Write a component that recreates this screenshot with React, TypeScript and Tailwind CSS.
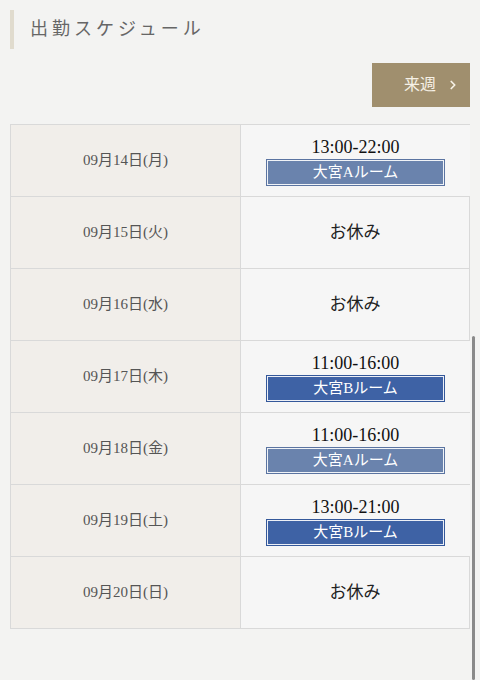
import { ChevronRight } from "lucide-react";

type Day = {
  date: string;
  time?: string;
  room?: "A" | "B";
};

const days: Day[] = [
  { date: "09月14日(月)", time: "13:00-22:00", room: "A" },
  { date: "09月15日(火)" },
  { date: "09月16日(水)" },
  { date: "09月17日(木)", time: "11:00-16:00", room: "B" },
  { date: "09月18日(金)", time: "11:00-16:00", room: "A" },
  { date: "09月19日(土)", time: "13:00-21:00", room: "B" },
  { date: "09月20日(日)" },
];

const serif = { fontFamily: '"Liberation Serif", "Noto Sans CJK JP", serif' };

function RoomBadge({ room }: { room: "A" | "B" }) {
  const isA = room === "A";
  return (
    <div
      className={
        isA
          ? "mx-auto w-[179px] border border-[#5b74a1] bg-[#6a83ad]"
          : "mx-auto w-[179px] border border-[#34589a] bg-[#3e62a5]"
      }
    >
      <div className="border border-white/90 h-[25px] flex items-center justify-center text-[15px] text-white leading-none">
        大宮{room}ルーム
      </div>
    </div>
  );
}

export default function App() {
  return (
    <div className="relative w-[480px] h-[680px] overflow-hidden bg-[#f3f3f2]" style={serif}>
      {/* heading */}
      <div className="pt-[10px] px-[10px]">
        <div className="flex items-center h-[39px] border-l-4 border-[#e0dbce] pl-[16px]">
          <h2 className="text-[18px] tracking-[4px] text-[#666]">出勤スケジュール</h2>
        </div>
      </div>

      {/* next week */}
      <div className="flex justify-end px-[10px] mt-[14px]">
        <button className="w-[98px] h-[44px] bg-[#a08f6e] text-[#f6f1e6] flex items-center pl-[32px] gap-[10px] text-[16px]">
          <span>来週</span>
          <ChevronRight className="w-[14px] h-[14px]" strokeWidth={3} />
        </button>
      </div>

      {/* schedule table */}
      <div className="mx-[10px] mt-[17px] border border-[#d9d9d9]">
        {days.map((d, i) => (
          <div
            key={d.date}
            className={i === 0 ? "grid grid-cols-[230px_1fr] h-[71px]" : "grid grid-cols-[230px_1fr] h-[72px] border-t border-[#d9d9d9]"}
          >
            <div className="bg-[#f1eeea] border-r border-[#d9d9d9] flex items-center justify-center text-[15px] text-[#555]">
              {d.date}
            </div>
            <div className="bg-[#f6f6f6] flex flex-col items-center justify-center px-[25px]">
              {d.time ? (
                <div className="w-full">
                  <div className="text-center text-[18px] leading-[22px] text-[#111] mb-[1px]">{d.time}</div>
                  <RoomBadge room={d.room!} />
                </div>
              ) : (
                <div className="text-[17px] text-[#222]">お休み</div>
              )}
            </div>
          </div>
        ))}
      </div>

      {/* overlay scroll indicator */}
      <div className="absolute right-[5px] top-[336px] w-[3px] h-[344px] rounded-full bg-[#8a8a8a]" />
    </div>
  );
}
